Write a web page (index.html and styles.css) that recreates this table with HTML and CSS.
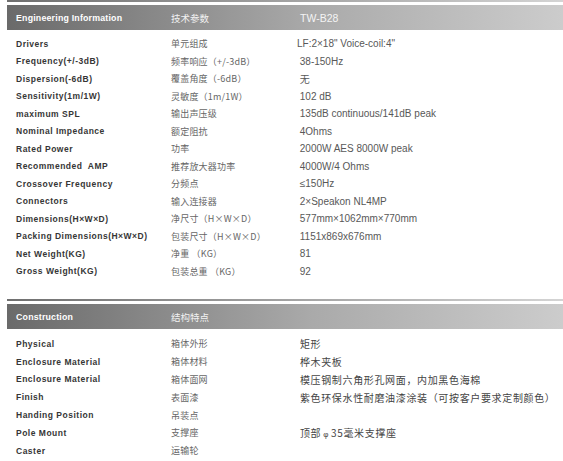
FILE: index.html
```html
<!DOCTYPE html>
<html>
<head>
<meta charset="utf-8">
<link rel="stylesheet" href="styles.css">
</head>
<body>
<div class="page">
  <section class="sec">
    <div class="rule"></div>
    <div class="head">
      <span class="h-en">Engineering Information</span>
      <span class="h-cn">技术参数</span>
      <span class="h-val">TW-B28</span>
    </div>
    <div class="rows">
      <div class="row"><span class="en">Drivers</span><span class="cn">单元组成</span><span class="val">LF:2×18" Voice-coil:4"</span></div>
      <div class="row"><span class="en">Frequency(+/-3dB)</span><span class="cn">频率响应（+/-3dB）</span><span class="val">&nbsp;38-150Hz</span></div>
      <div class="row"><span class="en">Dispersion(-6dB)</span><span class="cn">覆盖角度（-6dB）</span><span class="val">&nbsp;无</span></div>
      <div class="row"><span class="en">Sensitivity(1m/1W)</span><span class="cn">灵敏度（1m/1W）</span><span class="val">&nbsp;102 dB</span></div>
      <div class="row"><span class="en">maximum SPL</span><span class="cn">输出声压级</span><span class="val">&nbsp;135dB continuous/141dB peak</span></div>
      <div class="row"><span class="en">Nominal Impedance</span><span class="cn">额定阻抗</span><span class="val">&nbsp;4Ohms</span></div>
      <div class="row"><span class="en">Rated Power</span><span class="cn">功率</span><span class="val">&nbsp;2000W AES 8000W peak</span></div>
      <div class="row"><span class="en">Recommended&nbsp; AMP</span><span class="cn">推荐放大器功率</span><span class="val">&nbsp;4000W/4 Ohms</span></div>
      <div class="row"><span class="en">Crossover Frequency</span><span class="cn">分频点</span><span class="val">&nbsp;≤150Hz</span></div>
      <div class="row"><span class="en">Connectors</span><span class="cn">输入连接器</span><span class="val">&nbsp;2×Speakon NL4MP</span></div>
      <div class="row"><span class="en">Dimensions(H×W×D)</span><span class="cn">净尺寸（H×W×D）</span><span class="val">&nbsp;577mm×1062mm×770mm</span></div>
      <div class="row"><span class="en">Packing Dimensions(H×W×D)</span><span class="cn">包装尺寸（H×W×D）</span><span class="val">&nbsp;1151x869x676mm</span></div>
      <div class="row"><span class="en">Net Weight(KG)</span><span class="cn">净重 （KG）</span><span class="val">&nbsp;81</span></div>
      <div class="row"><span class="en">Gross Weight(KG)</span><span class="cn">包装总重 （KG）</span><span class="val">&nbsp;92</span></div>
    </div>
  </section>
  <section class="sec sec2">
    <div class="rule"></div>
    <div class="head">
      <span class="h-en">Construction</span>
      <span class="h-cn">结构特点</span>
      <span class="h-val"></span>
    </div>
    <div class="rows rows2">
      <div class="row"><span class="en">Physical</span><span class="cn">箱体外形</span><span class="val cnv">&nbsp;矩形</span></div>
      <div class="row"><span class="en">Enclosure Material</span><span class="cn">箱体材料</span><span class="val cnv">&nbsp;桦木夹板</span></div>
      <div class="row"><span class="en">Enclosure Material</span><span class="cn">箱体面网</span><span class="val cnv">&nbsp;模压钢制六角形孔网面，内加黑色海棉</span></div>
      <div class="row"><span class="en">Finish</span><span class="cn">表面漆</span><span class="val cnv">&nbsp;紫色环保水性耐磨油漆涂装（可按客户要求定制颜色）</span></div>
      <div class="row"><span class="en">Handing Position</span><span class="cn">吊装点</span><span class="val cnv"></span></div>
      <div class="row"><span class="en">Pole Mount</span><span class="cn">支撑座</span><span class="val cnv">&nbsp;顶部<span class="phi">φ</span>35毫米支撑座</span></div>
      <div class="row"><span class="en">Caster</span><span class="cn">运输轮</span><span class="val cnv"></span></div>
    </div>
  </section>
</div>
</body>
</html>
```

FILE: styles.css
```css
html, body {
  margin: 0;
  padding: 0;
  background: #ffffff;
}

.page {
  padding-left: 7px;
  font-family: "Liberation Sans", Arial, "Noto Sans CJK SC", sans-serif;
}

.sec2 {
  margin-top: 19px;
}

.rule {
  height: 2px;
  background: linear-gradient(to right, #6f6f6f, #8e8e8e 30%, #d4d4d4);
}

.head {
  margin-top: 3px;
  height: 25px;
  background: linear-gradient(to right, #6a6a6a, #8a8a8a 28%, #aaaaaa 55%, #cccccc);
  display: grid;
  grid-template-columns: 155px 129px 1fr;
  align-items: center;
  padding-left: 9px;
  color: #ffffff;
}

.h-en {
  font-weight: bold;
  font-size: 8.8px;
  letter-spacing: 0.2px;
}

.h-cn {
  font-family: "Noto Sans CJK SC", sans-serif;
  font-size: 9.5px;
  color: #f2f2f2;
}

.h-val {
  font-size: 10.5px;
  color: #f4f4f4;
}

.rows {
  padding-top: 5px;
}

.row {
  display: grid;
  grid-template-columns: 155px 129px 1fr;
  align-items: center;
  height: 17.5px;
  padding-left: 9px;
  white-space: nowrap;
}

.rows2 .row {
  height: 17.8px;
}

.rows2 {
  padding-top: 6px;
}

.en {
  font-weight: bold;
  font-size: 8.5px;
  letter-spacing: 0.5px;
  color: #363636;
}

.cn {
  font-family: "Noto Sans CJK SC", sans-serif;
  font-size: 9px;
  color: #666666;
  letter-spacing: 0.2px;
}

.val {
  font-size: 10px;
  color: #585858;
  margin-left: -3px;
}

.cnv {
  font-family: "Noto Sans CJK SC", sans-serif;
  font-size: 10px;
  letter-spacing: 0.65px;
  color: #444444;
}

.phi {
  font-family: "Liberation Sans", sans-serif;
  font-size: 8px;
  margin: 0 2px;
}
```
